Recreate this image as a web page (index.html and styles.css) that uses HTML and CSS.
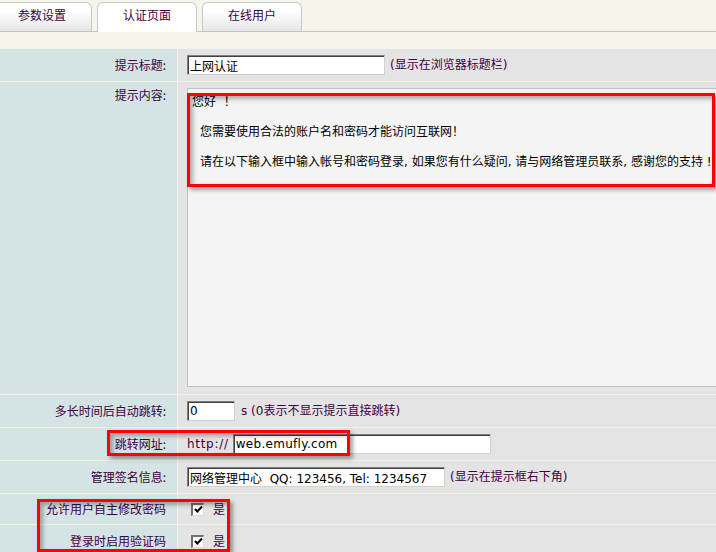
FILE: index.html
```html
<!DOCTYPE html>
<html lang="zh-CN">
<head>
<meta charset="utf-8">
<title>认证页面</title>
<link rel="stylesheet" href="styles.css">
</head>
<body>
<div class="page">
  <div class="tabs">
    <div class="tab">参数设置</div>
    <div class="tab active">认证页面</div>
    <div class="tab">在线用户</div>
  </div>

  <div class="form">
    <div class="lbl">提示标题:</div>
    <div class="val">
      <input class="inp w-title" type="text" value="上网认证">
      <span class="note">(显示在浏览器标题栏)</span>
    </div>

    <div class="lbl top">提示内容:</div>
    <div class="val top">
      <div class="ta">
        <p>您好&nbsp; ！</p>
        <p></p>
        <p class="ind">您需要使用合法的账户名和密码才能访问互联网！</p>
        <p></p>
        <p class="ind">请在以下输入框中输入帐号和密码登录, 如果您有什么疑问, 请与网络管理员联系, 感谢您的支持 !!</p>
      </div>
    </div>

    <div class="lbl">多长时间后自动跳转:</div>
    <div class="val">
      <input class="inp w-sec" type="text" value="0">
      <span class="note gap1">s (0表示不显示提示直接跳转)</span>
    </div>

    <div class="lbl">跳转网址:</div>
    <div class="val">
      <span class="note prefix">http://</span>
      <input class="inp w-url" type="text" value="web.emufly.com">
    </div>

    <div class="lbl">管理签名信息:</div>
    <div class="val">
      <input class="inp w-sign" type="text" value="网络管理中心  QQ: 123456, Tel: 1234567">
      <span class="note">(显示在提示框右下角)</span>
    </div>

    <div class="lbl">允许用户自主修改密码</div>
    <div class="val">
      <span class="cb"><svg viewBox="0 0 9 9" width="9" height="9"><path d="M1 4 L3.3 6.5 L8 1.5" fill="none" stroke="#000" stroke-width="2"/></svg></span>
      <span class="note yes">是</span>
    </div>

    <div class="lbl">登录时启用验证码</div>
    <div class="val">
      <span class="cb"><svg viewBox="0 0 9 9" width="9" height="9"><path d="M1 4 L3.3 6.5 L8 1.5" fill="none" stroke="#000" stroke-width="2"/></svg></span>
      <span class="note yes">是</span>
    </div>
  </div>

  <div class="mark mark-content"></div>
  <div class="mark mark-url"></div>
  <div class="mark mark-check"></div>
</div>
</body>
</html>
```

FILE: styles.css
```css
html, body {
  margin: 0;
  padding: 0;
}

body {
  font-family: "DejaVu Sans", "Noto Sans CJK SC", sans-serif;
  font-size: 12px;
  color: #400040;
}

.page {
  position: relative;
  width: 716px;
  height: 552px;
  overflow: hidden;
  background: #f5f5eb;
}

/* ---- tabs ---- */
.tabs {
  display: flex;
  gap: 5px;
  margin-left: -8px;
  padding-top: 2px;
  height: 29px;
  border-bottom: 1px solid #c4c4c4;
}

.tab {
  box-sizing: border-box;
  width: 100px;
  height: 29px;
  border: 1px solid #c8c8c8;
  border-bottom: none;
  border-radius: 6px 6px 0 0;
  background: linear-gradient(#ffffff, #ffffff 30%, #e6e6e6);
  text-align: center;
  line-height: 24px;
  font-family: "Noto Sans CJK SC", sans-serif;
  color: #400040;
}

.tab.active {
  height: 30px;
  margin-bottom: -1px;
  background: #ffffff;
}

/* ---- form grid ---- */
.form {
  margin-top: 17px;
  display: grid;
  grid-template-columns: 177px 1fr;
  grid-template-rows: 32px 312px 32px 32px 32px 30px 32px;
  gap: 1px;
  background: #f2f2e2;
}

.lbl {
  background: #d4e3e3;
  display: flex;
  align-items: center;
  justify-content: flex-end;
  padding-right: 11px;
  font-family: "Noto Sans CJK SC", sans-serif;
  line-height: 14px;
}

.lbl.top {
  align-items: flex-start;
  padding-top: 6px;
}

.val {
  background: #e4e4e4;
  display: flex;
  align-items: center;
  gap: 5px;
  padding-left: 9px;
  min-width: 0;
  line-height: 14px;
}

.val.top {
  align-items: flex-start;
}

.note {
  white-space: nowrap;
}

.gap1 {
  margin-left: 1px;
}

.prefix {
  letter-spacing: 0.7px;
}

/* ---- inputs ---- */
.inp {
  box-sizing: border-box;
  height: 20px;
  margin: 0;
  padding: 0 2px 0 2px;
  font: inherit;
  font-size: 12px;
  color: #000;
  background: #fff;
  border-top: 1px solid #808080;
  border-left: 1px solid #808080;
  border-right: 1px solid #d4d0c8;
  border-bottom: 1px solid #d4d0c8;
  box-shadow: inset 1px 1px 0 #404040;
  outline: none;
}

.w-title { width: 198px; }
.w-sec { width: 48px; }
.w-url { width: 258px; margin-left: -1px; letter-spacing: 0.3px; }
.w-sign { width: 258px; }

/* ---- textarea-like box ---- */
.ta {
  box-sizing: border-box;
  flex: none;
  width: 580px;
  height: 299px;
  margin-top: 6px;
  padding: 6px 0 0 4px;
  border: 1px solid #c0c0c0;
  background: #f4f4f4;
  color: #000;
  font-family: "DejaVu Sans", "Noto Sans CJK SC", sans-serif;
  line-height: 15px;
  white-space: nowrap;
}

.ta p {
  margin: 0;
  height: 15px;
}

.ta .ind {
  padding-left: 8px;
}

/* ---- checkbox ---- */
.cb {
  box-sizing: border-box;
  width: 13px;
  height: 13px;
  margin-left: 4px;
  border-top: 2px solid #707070;
  border-left: 2px solid #707070;
  border-right: 1px solid #dcdcdc;
  border-bottom: 1px solid #dcdcdc;
  background: #fff;
  display: flex;
  align-items: center;
  justify-content: center;
}

.yes {
  margin-left: 4px;
  font-family: "Noto Sans CJK SC", sans-serif;
}

/* ---- red annotation frames ---- */
.mark {
  position: absolute;
  box-sizing: border-box;
  border: 3px solid #ff0000;
  box-shadow: 3px 3px 4px rgba(0, 0, 0, 0.35), inset 3px 3px 4px rgba(0, 0, 0, 0.3);
  pointer-events: none;
}

.mark-content {
  left: 187px;
  top: 93px;
  width: 528px;
  height: 94px;
}

.mark-url {
  left: 107px;
  top: 430px;
  width: 243px;
  height: 26px;
}

.mark-check {
  left: 37px;
  top: 499px;
  width: 193px;
  height: 53px;
}
```
